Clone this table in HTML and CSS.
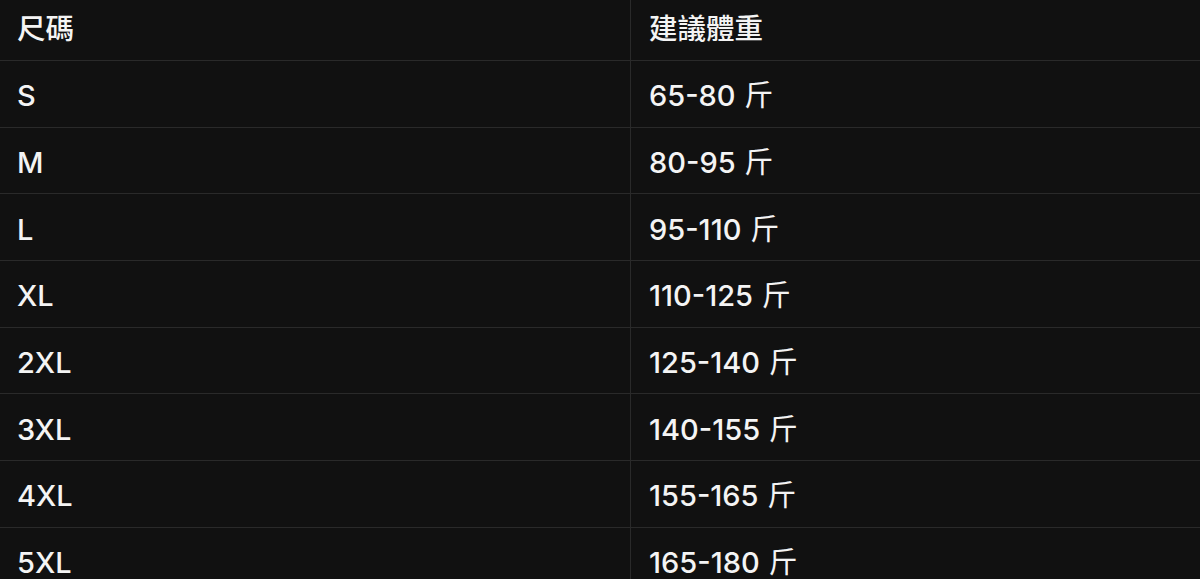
FILE: index.html
```html
<!DOCTYPE html>
<html lang="zh-Hant">
<head>
<meta charset="utf-8">
<link rel="stylesheet" href="styles.css">
</head>
<body>
<div class="table">
  <div class="cell head">尺碼</div><div class="cell head right">建議體重</div>
  <div class="cell">S</div><div class="cell right">65-80 <span class="unit">斤</span></div>
  <div class="cell">M</div><div class="cell right">80-95 <span class="unit">斤</span></div>
  <div class="cell">L</div><div class="cell right">95-110 <span class="unit">斤</span></div>
  <div class="cell">XL</div><div class="cell right">110-125 <span class="unit">斤</span></div>
  <div class="cell">2XL</div><div class="cell right">125-140 <span class="unit">斤</span></div>
  <div class="cell">3XL</div><div class="cell right">140-155 <span class="unit">斤</span></div>
  <div class="cell">4XL</div><div class="cell right">155-165 <span class="unit">斤</span></div>
  <div class="cell last">5XL</div><div class="cell right last">165-180 <span class="unit">斤</span></div>
</div>
</body>
</html>
```
FILE: styles.css
```css
html, body {
  margin: 0;
  padding: 0;
  background: #111111;
}
body {
  width: 1200px;
  height: 579px;
  overflow: hidden;
  font-family: Inter, "Noto Sans CJK TC", sans-serif;
  color: #f4f4f4;
}
.table {
  display: grid;
  grid-template-columns: 630px 570px;
  grid-auto-rows: 66.67px;
  grid-template-rows: 61px;
}
.cell {
  box-sizing: border-box;
  border-bottom: 1px solid #2a2a2a;
  padding: 4px 0 0 17px;
  display: flex;
  align-items: center;
  white-space: pre;
  font-size: 29px;
  font-weight: 500;
  line-height: 1;
}
.head {
  padding-top: 0;
  padding-bottom: 2px;
  font-size: 28.5px;
}
.unit {
  font-weight: 400;
  margin-left: 1px;
}
.right {
  border-left: 1px solid #2a2a2a;
  padding-left: 18px;
}
.last {
  border-bottom: none;
}
```
